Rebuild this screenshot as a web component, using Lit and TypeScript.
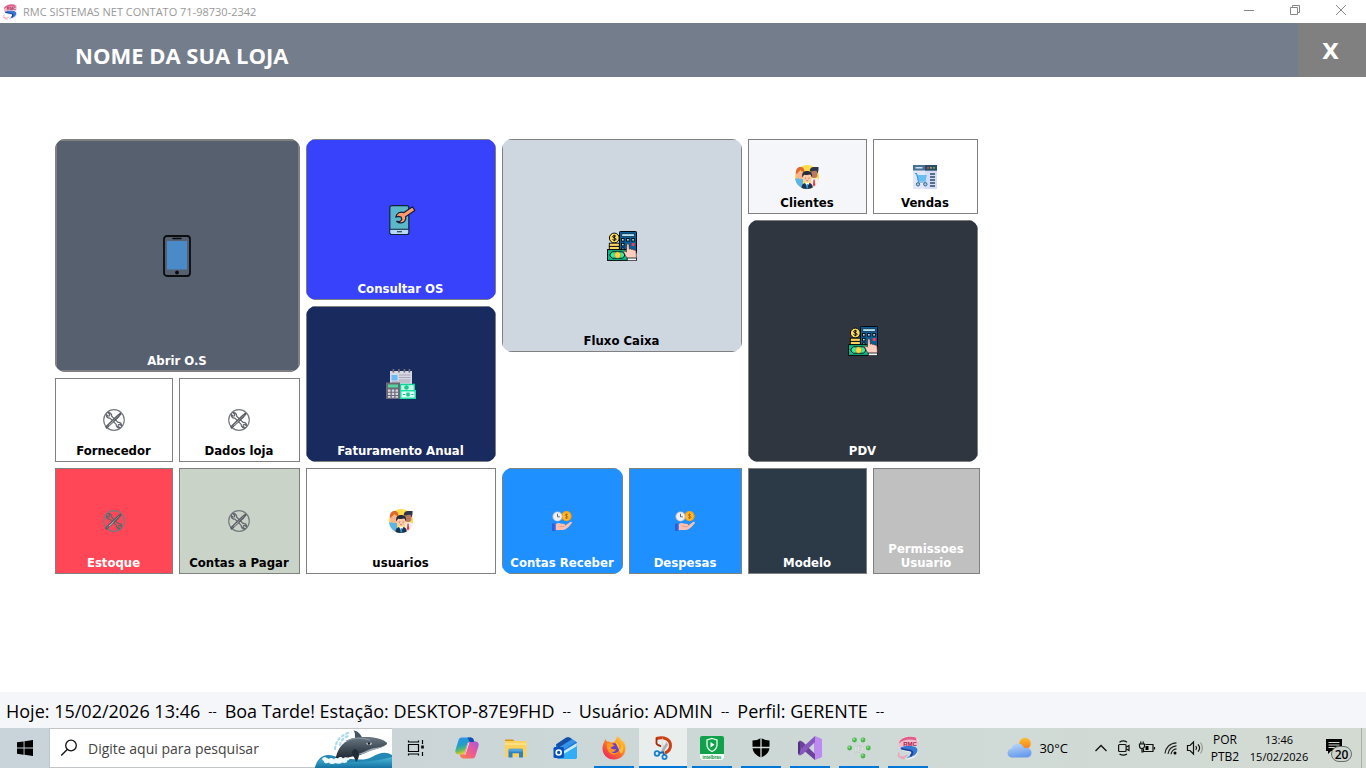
import { LitElement, html, css, svg, TemplateResult } from "lit";
import { customElement, property } from "lit/decorators.js";
import { classMap } from "lit/directives/class-map.js";

const icon = (w: number, h: number, body: unknown) =>
  html`<svg width=${w} height=${h} viewBox="0 0 ${w} ${h}" aria-hidden="true">${body}</svg>`;

const phone = icon(28, 42, svg`
  <rect x="1" y="1" width="26" height="40" rx="3" fill="none" stroke="#0b0d10" stroke-width="1.8"/>
  <rect x="4" y="6" width="20" height="28.500" fill="#4a8ac9"/>
  <path d="M10 3.500h8" stroke="#0b0d10" stroke-width="1.500" stroke-linecap="round"/>
  <circle cx="14" cy="37.500" r="1.900" fill="#0b0d10"/>`);

const phoneRepair = icon(30, 30, svg`
  <rect x="3.800" y=".6" width="19" height="28.800" rx="2" fill="#5cb8c9" stroke="#14203c" stroke-width="1.200"/>
  <path d="M4.400 24.500h17.800v3a1.500 1.500 0 0 1-1.500 1.400H6a1.500 1.500 0 0 1-1.600-1.400z" fill="#b5daf5"/>
  <path d="M4 24.300h18.600" stroke="#14203c" stroke-width="1.100"/>
  <path d="M11 26.800h5" stroke="#14203c" stroke-width="1.100"/>
  <path d="M26.500 1.800 18 7.600c-3.500-1.300-7.500.2-8.200 4.600l2.400-.8 3 .8.600 2.400-2 2-3.200-.3c2.500 2.600 7 2 8.500-.8.700-1.200.8-2.600.5-3.800l9.200-6.300z" fill="#ff9a6a" stroke="#14203c" stroke-width="1.200" stroke-linejoin="round"/>`);

const cashCalculator = icon(30, 30, svg`
  <rect x="12.500" y=".5" width="17" height="22" rx=".8" fill="#0b5f98" stroke="#05080c"/>
  <rect x="14.800" y="2.800" width="12.500" height="2.700" fill="#b9e3f5" stroke="#05223a" stroke-width=".7"/>
  <g fill="#b9d9ea" stroke="#05080c" stroke-width=".9"><rect x="14.500" y="7.500" width="2.600" height="2.600"/><rect x="19.600" y="7.500" width="2.600" height="2.600"/><rect x="24.800" y="7.500" width="2.600" height="2.600"/><rect x="14.500" y="12.300" width="2.600" height="2.600"/><rect x="14.500" y="17" width="2.600" height="2.600"/></g>
  <rect x="24.700" y="12" width="3" height="3" fill="#ef3f55"/>
  <circle cx="7.300" cy="7" r="4.900" fill="#ffdb57" stroke="#05080c"/>
  <path d="M9 5.300c-1-1-3.400-.8-3.400.5s3.500.8 3.500 2.300-2.600 1.500-3.600.4M7.300 3.800v6.400" fill="none" stroke="#05080c" stroke-width="1"/>
  <rect x="2.300" y="12.200" width="10" height="3.200" fill="#ffd35c" stroke="#05080c" stroke-width=".9"/>
  <rect x="2.300" y="15.400" width="10" height="3.200" fill="#ffd35c" stroke="#05080c" stroke-width=".9"/>
  <rect x=".5" y="18.600" width="20" height="10.800" fill="#12b582" stroke="#05080c"/>
  <path d="M5.500 20.800h10l2 2.200v2l-2 2.200h-10L3 25v-2z" fill="#2cf0a8" stroke="#05080c" stroke-width=".9"/>
  <circle cx="10.600" cy="24" r="3.100" fill="#ffd24a" stroke="#a98212" stroke-width=".5"/>
  <path d="M19.800 13c1.500-.6 2.200.2 2.300 1.400l.3 3.800c1-.8 2-.5 2.300.4.800-.6 1.700-.3 2 .5 1.400-.4 2.300.3 2.400 1.500l.4 7H20.500c-1.800-2.200-2.800-4.400-3.700-6.300-.3-1.400 1.400-1.700 2.200-.6l.4.5z" fill="#ffcdbd" stroke="#2b1512" stroke-width=".6"/>
  <path d="M20.200 27h9.300v2.700h-9.300z" fill="#f3f6f7" stroke="#05080c" stroke-width=".8"/>`);

const billing = icon(30, 30, svg`
  <path d="M4 2h22v15H4z" fill="#d6d8e3"/>
  <g fill="#6f6a78"><path d="M6.500 0h1.800v3.500H6.500zM12 0h1.800v3.500H12zM17.500 0h1.800v3.500h-1.800zM22.500 0h1.800v3.500h-1.800z"/></g>
  <path d="M5.500 6h6v5.500h-6z" fill="#6cb9f7"/>
  <path d="M13 6h11.500M13 8.500h11.500M13 11h11.500M6 13h18" stroke="#aaa4b8" stroke-width="1.100"/>
  <path d="M0 13.500h14V30H0z" fill="#6d6877"/>
  <path d="M2 15.500h10v3H2z" fill="#55d49d"/>
  <g fill="#d9d6e3"><path d="M2 20.500h2.500v2.300H2zM5.800 20.500h2.500v2.300H5.800zM9.500 20.500H12v2.300H9.500zM2 23.700h2.500V26H2zM5.800 23.700h2.500V26H5.800zM9.500 23.700H12V26H9.500zM2 26.900h2.500v1.900H2zM5.800 26.900h2.500v1.900H5.800zM9.500 26.900H12v1.900H9.500z"/></g>
  <path d="M14 14.800h15V22H14z" fill="#0dd69a"/><path d="M15.200 16.200h12.500V22H15.200z" fill="#c8fce8"/>
  <circle cx="20.500" cy="18.500" r="2.300" fill="#1ac98f"/>
  <path d="M14 21h16v9H14z" fill="#1be0a4"/><path d="M15.500 22.500h13v6h-13z" fill="#e6fff6"/>
  <circle cx="22" cy="25.500" r="2.300" fill="#32d9a5"/><path d="M17 25.500h2M25.500 25.500h2M22 24v3" stroke="#18b585" stroke-width="1"/>`);

const tools = icon(22, 22, svg`
  <circle cx="11" cy="11" r="10.300" fill="none" stroke="#777b81" stroke-width="1.200"/>
  <path d="M5 3.700 6.900 5.500l-.4 1.300-1.400.4-1.700-1.700c-.4 2.200 1.200 4 3.500 3.600l6.300 6.300c-.3 2.300 1.500 3.900 3.600 3.400L15 17.200l.4-1.500 1.500-.4 1.700 1.700c.4-2.300-1.300-3.900-3.600-3.600L8.700 7.200C9 4.900 7.300 3.300 5 3.700z" fill="none" stroke="#62666c" stroke-width="1.200"/>
  <path d="m3.600 19.200-.9-1.400L14.200 6.600l3.200-2.400.6.600-2.400 3.200z" fill="#8b8e93" stroke="#54585e" stroke-width="1.100" stroke-linejoin="round"/>
  <path d="M6 16.300 10.500 12" stroke="#d8dadc" stroke-width=".8"/>`);

const people = icon(24, 24, svg`
  <defs><clipPath id="disc"><circle cx="12" cy="12" r="12"/></clipPath></defs>
  <g clip-path="url(#disc)">
    <path d="M0 0h24v24H0z" fill="#ffdc4a"/>
    <path d="M-1 24V14.500c1.500-2 7-2 9 0V24z" fill="#5cb5e8"/>
    <path d="M16 14c2-1 7-1 9 1v9h-9z" fill="#edf0f4"/>
  </g>
  <path d="M1.300 6.500h7v5.800c-2 2.300-5.500 2-7-.3z" fill="#f8b48e"/>
  <path d="M.8 8.500C.6 4.500 2.500 2 5.300 2c3 0 4.500 2 4.100 5-1.600 0-3-.6-4-1.800C4 7 2.400 7.200 2 9z" fill="#e0692f"/>
  <path d="M15.800 5h6.800l-.3 6c-1 2.500-4.800 2.800-6.500.3z" fill="#b97860"/>
  <path d="M14.800 6.500c-.3-3 1.400-4.500 4-4.500H23.500c.2 1.500 0 4-.9 6.500l-1-2.800c-2 0-4.500.7-6.800.8z" fill="#30344a"/>
  <path d="M18.400 14.500h1.200l.8 5.500-1.500 1.500-1-1.500z" fill="#ef3e4c"/>
  <path d="M6.500 22.700c0-3 1.800-4.400 3.800-4.700h4c2.200.4 3.400 1.900 3.500 4.500-3 2-8 2-11.300.2z" fill="#1d3150"/>
  <path d="m9.800 17.500 2.400 4.300 2.500-4.300z" fill="#fff"/><path d="M11.700 19h1.100l.5 4.500h-2z" fill="#26a0dd"/>
  <circle cx="12.200" cy="12.800" r="4.600" fill="#ffc9a7"/>
  <path d="M7.300 12.500c-.8-4.500 1.200-6.500 4.800-6.500s5.600 2 4.900 6.500c-.7-1.500-1-2.500-1.800-3-2 .7-5 .4-6 .2-.8.700-1.200 1.600-1.900 2.800z" fill="#252b3e"/>
  <path d="M10.300 12.700v.8M14 12.700v.8" stroke="#333" stroke-width=".8"/><path d="M11 15.300q1.200.8 2.300 0" fill="none" stroke="#c06a50" stroke-width=".7"/>`);

const shopWindow = icon(24, 24, svg`
  <path d="M0 0h24v24H0z" fill="#e3e7fc"/><path d="M12 0h12v24H12z" fill="#d5dcfa"/>
  <path d="M0 0h24v5.500H0z" fill="#467395"/><path d="M12 0h12v5.500H12z" fill="#2b4c66"/>
  <path d="M2.500 2.800h7" stroke="#e6f2ff" stroke-width="1.300"/>
  <circle cx="15" cy="2.800" r=".9" fill="#f05b50"/><circle cx="18" cy="2.800" r=".9" fill="#f5bd49"/><circle cx="21" cy="2.800" r=".9" fill="#6bcf72"/>
  <path d="M3.500 10h10.300l-1.200 6H5z" fill="#68bdf3"/>
  <path d="M1.800 8.500h1.800L5.600 17h7.700" fill="none" stroke="#3c9de0" stroke-width="1.100"/>
  <circle cx="5" cy="19.300" r="1.700" fill="#9fc8e8" stroke="#355f80" stroke-width=".9"/><circle cx="12.300" cy="19.300" r="1.700" fill="#9fc8e8" stroke="#355f80" stroke-width=".9"/>
  <path d="M17 9h5M17 12h5M17 15h5M17 18h5M17 21h5" stroke="#2e4c65" stroke-width="1.400"/>`);

const handCoin = icon(20, 20, svg`
  <circle cx="14.500" cy="5.200" r="5.100" fill="#f6a415"/><circle cx="14.500" cy="5.200" r="3.700" fill="#ffba2e"/>
  <path d="M16 3.700c-1-.8-2.900-.5-2.900.5s2.900.7 2.900 2-2.100 1.400-3 .4M14.500 2.500v5.400" fill="none" stroke="#b66a08" stroke-width=".9"/>
  <circle cx="5.500" cy="5.500" r="5.100" fill="#b9bccb"/><circle cx="5.500" cy="5.500" r="4.200" fill="#edf0f5"/>
  <path d="M5.500 2.800v3h2.300" fill="none" stroke="#555a6b" stroke-width=".9"/>
  <path d="M3.500 13.500c2-1.800 3.500-1.800 5.500-1 1.500.5 3 .2 3.800.8.400.5.300 1.200-.2 1.700l5.500-4c1-.7 2.400.1 1.600 1.200-1.700 2.400-4 5-6.700 6.300-3 1-6 .2-9.500.8z" fill="#ffc0ab"/>
  <path d="M7.500 15.500h5" stroke="#e99a86" stroke-width=".9"/>
  <path d="M0 12.500h3.500V20H0z" fill="#2c5ddb"/><path d="M2.800 12.500h1.200V19H2.800z" fill="#4d82ec"/>`);

const rmcLogo = (size: number) => html`<svg width=${size} height=${size} viewBox="0 0 24 24" aria-hidden="true">
  <path d="M7 1.500C12-.5 18-.5 22.500 3c.6 6-4 4-9 4.500-3 .3-3.500 1.500-1 2.200 4.500.8 9 1.300 9.500 5.500C22 20 17 23.500 9 23.500c4.500-1.500 7-3.500 6.500-6.500-2-1.500-8-1-11-4C1.500 9 3 4 7 1.500z" fill="#e9eef8"/>
  <path d="M21.500 1.500C12-1 2.500 2 2.500 8c0 3 2 4.500 4.500 5 0-2.500 2-3 4-3h10c1-1.500 1.500-4 .5-5.500z" fill="#f3b9cc"/>
  <path d="M19.500 1.500C12-.5 4 2 3 7.500 8 3 14 3 20.500 4.500z" fill="#dd5f88"/>
  <path d="M4 12c3 2.500 9 1 11.500 3 1.500 2-1 4.500-5 7 7-1 11-4 11-8 0-2.500-3-3.500-6-4h-6c-2 0-3 1-5.500 2z" fill="#3678d2"/>
  <path d="M5 12.500c4 2 9 .8 11 3 .8 1.500 0 3-1.500 4.500" fill="none" stroke="#1b3f98" stroke-width="1.800"/>
  <path d="M3 16.500c-1.500 3 1 6.300 5.500 6M2 20c3 2 7 1.500 9-1" fill="none" stroke="#efa0ba" stroke-width="1.400"/>
  <text x="14" y="9.500" text-anchor="middle" font-family="Liberation Sans" font-size="6" font-weight="700" fill="#a91d4c">RMC</text></svg>`;

const whale = html`<svg class="whale" width="77" height="40" viewBox="0 0 77 40" aria-hidden="true">
  <defs>
    <linearGradient id="sea" x2="0" y2="1"><stop stop-color="#4bb7d6"/><stop offset="1" stop-color="#1473a3"/></linearGradient>
    <linearGradient id="skin" x2="0" y2="1"><stop stop-color="#6b7883"/><stop offset=".5" stop-color="#3d4953"/><stop offset="1" stop-color="#17212b"/></linearGradient>
  </defs>
  <path d="M0 40c1-6 5-12 12-13 8-1 11 5 20 4 12 0 17 2 25-2 7-4 13-6 20-2v13z" fill="#2388b6"/>
  <g fill="none" stroke="#a9daf0" stroke-width="2.200" stroke-linecap="round" stroke-dasharray="2 3"><path d="M20 21c1-8 5-13 13-16"/><path d="M25 17c1-5 5-9 10-9"/></g>
  <path d="M18 33c3-1 3-6 5-10C27 14 37 9 47 9c10-.5 19 1 24 5 2 1.500 1 2.500-1 3.500-6 3.500-14 4-20 7.500-8 4-13 3-19 5-5 2-8 4-13 3z" fill="url(#skin)"/>
  <path d="M40 10c0-4 0-6-1.500-7.500C43 3 45.500 6 47 9.500z" fill="#46545f"/>
  <path d="M70 17.500C64 20 58 19.500 53 22c-4 2-8 4-13 4.500 5 .5 9-.5 13-2.500 6-3 12-3 17-6.500z" fill="#9ba9b3"/>
  <path d="M39 21c2 0 5 2 5 5 0 3-1 6-3 8-1-5-4-6-4-10z" fill="#202c37"/>
  <path d="M51 15.500c2-1.500 5-1.500 6 0-1 2-4 2-6 0z" fill="#cfd8de"/><circle cx="54" cy="15.500" r="1.300" fill="#111820"/>
  <path d="M31 13c8-4 17-3 24-1" fill="none" stroke="#8393a0" stroke-width="1.300"/>
  <path d="M0 40c1-5 5-10 11-11-1 5 5 5 9 6 9-1 14 0 20-1 13 0 22-1 37-5v11z" fill="url(#sea)"/>
  <path d="M10 29c-3 0-4 3-1 4-1 2 3 3 5 1.500 1 2 5 2 6 .5 3 1 6 1 7-.5 3 1 6 0 5-2 3 0 3-2 1-2.500-2-1.500-4-.5-5 .5-1-2-4-2-5 0-2-1-4 0-4 1-1-2-4-2-5-.5z" fill="#eef9fd"/></svg>`;

const taskIcons: Record<string, TemplateResult> = {
  view: icon(18, 18, svg`<g fill="none" stroke="#000" stroke-width="1.200"><path d="M1.500 5.500h10v7h-10z"/><path d="M1.500 1.500V3h10V1.500M1.500 16.500V15h10v1.500M15.500 1v4M15.500 13v4"/></g><path d="M14.200 6.500h2.600v3h-2.600z"/>`),
  copilot: icon(24, 24, svg`
    <defs><linearGradient id="ca" x2=".3" y2="1"><stop stop-color="#2a90f2"/><stop offset=".5" stop-color="#1fa0c4"/><stop offset=".75" stop-color="#5fb86a"/><stop offset="1" stop-color="#f2cb1c"/></linearGradient><linearGradient id="cb" x1="1" x2="0" y2="1"><stop stop-color="#a857dc"/><stop offset=".5" stop-color="#ef5a91"/><stop offset="1" stop-color="#f9813d"/></linearGradient></defs>
    <path d="M6.500 1.500h9c2 0 2.700 1 3.200 2.500l.6 2h-4.500c-1.500 0-2.200.8-2.600 2l-2.500 8c-.6 1.700-1.500 2.500-3.200 2.500H3.500C.8 18.500-.2 16 .6 13.500l2.900-9.300C4 2.500 5 1.500 6.500 1.500z" fill="url(#ca)"/>
    <path d="M17.500 22.500h-9c-2 0-2.700-1-3.200-2.500l-.6-1.500h2.500c1.700 0 2.500-.8 3-2.500l2.600-8.500c.5-1.500 1.300-2 2.700-2h5c2.700 0 3.700 2.500 2.900 5l-2.900 9.300c-.5 1.700-1.500 2.700-3 2.700z" fill="url(#cb)"/>
    <path d="M12.500 1.500h3c2 0 2.700 1 3.200 2.500l.6 2h-4.500z" fill="#1c48a9"/>
    <path d="M10.500 16.500 13 8c.3-1 .8-1.500 1.500-1.700l-4 12.200H7.500c1.700 0 2.500-.5 3-2z" fill="#eef2ef"/>`),
  folder: icon(24, 24, svg`<path d="M1 3.500h8l2 2h-10z" fill="#dd9412"/><path d="M1 5h21.500v16H1z" fill="#fcd15c"/><path d="M1 7h21.500v2H1z" fill="#ffdf83"/><path d="M4.500 21.500v-7.200c0-1 .7-1.500 1.500-1.500h11.500c1 0 1.500.6 1.500 1.500v7.200h-4v-4.300H8.500v4.300z" fill="#2d82c5"/><path d="M5 13h13.800v2.500H4.500z" fill="#54a8dd"/>`),
  outlook: icon(24, 24, svg`
    <path d="M3 8.500 13 1.800c1.400-.8 2.600-.8 4 0l7 4.700v14c0 1.500-1 2.500-2.500 2.500H6.500C4.500 23 3 22 3 20z" fill="#1976d8"/>
    <path d="M3 8.500 13 1.800c1.400-.8 2.600-.8 4 0l2 1.400L6 12z" fill="#1550a5"/>
    <path d="M5 12 19 3.200l4 2.600L9 15z" fill="#3593ea"/><path d="m9 16 14.800-9v4.500L12 18.500z" fill="#c9e9fd"/>
    <path d="M24 10 9 19l-3 3.800c.5.200 1 .2 1.500.2h14c1.500 0 2.500-1 2.500-2.500z" fill="#31aef7"/>
    <rect x=".5" y="11" width="10.500" height="11" rx="1.500" fill="#0b52b8"/><circle cx="5.700" cy="16.500" r="2.500" fill="none" stroke="#fff" stroke-width="1.600"/>`),
  firefox: icon(24, 24, svg`
    <defs><linearGradient id="ff" x1="1" x2=".2" y2="1"><stop stop-color="#ffe14d"/><stop offset=".45" stop-color="#ff8a1c"/><stop offset="1" stop-color="#f0245d"/></linearGradient></defs>
    <path d="M15 0c4 2.500 4.200 4.500 5 5.500l.5-1C23 7 23.600 10 23.500 13c-.5 6.500-5.500 10.500-11.500 10.500C5 23.500.5 18.500.5 12.500c0-3 .8-5 2-7L3 3l2 2.500c1.500-.3 3 0 4 1 2 .2 3-.2 4-1.500C14.500 3 15 1.500 15 0z" fill="url(#ff)"/>
    <circle cx="12.300" cy="12.300" r="5" fill="#6b3dcb"/>
    <path d="M5 7.500c3-.8 6 0 7.500 2.200-1.500 1-3.500 1-3.800 2.500 2 .8 3.500 1.700 5.300.8-.5 2.500-3 3.500-5 2.500 2 2.500 6 2 8-.5C15 20 8 19 6.300 15 5 12.500 4.500 10 5 7.500z" fill="#ff9b22"/>
    <path d="M13 5.500c2 1 5 3 4.500 8 2-1 2.500-5 .5-7.500 4 3 4.500 9 1 12" fill="#ffc233"/>`),
  snip: icon(24, 24, svg`
    <path d="M5.500 2.500C13 0 19.500 3.500 19.500 9.500c0 4-2 6-5.500 7.500" fill="none" stroke="#cf3e12" stroke-width="3"/>
    <path d="M5.500 1.500v6c1 2 4 2.700 7 3" fill="none" stroke="#a52b0c" stroke-width="1.800"/>
    <path d="m11.500 1 2 15-2 2-1.500-8z" fill="#dfe3e5"/><path d="m15.500 6-6 10 1.800 2 5.700-9z" fill="#a9b0b5"/>
    <circle cx="6" cy="17.500" r="2.300" fill="none" stroke="#1583ce" stroke-width="1.800"/><circle cx="13.500" cy="21" r="2.100" fill="none" stroke="#1583ce" stroke-width="1.800"/><path d="m8.300 17 4-.8 1 2.800" fill="none" stroke="#116aad" stroke-width="1.800"/>`),
  intelbras: html`<svg width="24" height="24" viewBox="0 0 24 24" aria-hidden="true"><rect width="24" height="24" rx="2" fill="#12a14b"/><path d="M0 18h24v4a2 2 0 0 1-2 2H2a2 2 0 0 1-2-2z" fill="#f4fbf6"/><path d="M12 2.500 17 4v5c0 3-2 5-5 6.500C9 14 7 12 7 9V4z" fill="none" stroke="#e8fff0" stroke-width="1.300"/><path d="m10.500 6 4 2.700-4 2.700z" fill="#fff"/><text x="12" y="22.500" text-anchor="middle" font-family="Liberation Sans" font-size="4.500" font-weight="700" fill="#12913f">intelbras</text></svg>`,
  defender: icon(20, 20, svg`<path d="M10 0c2.500 1.700 5.500 2.500 8.500 2.500V9c0 5-3.500 8.500-8.500 10.500C5 17.500 1.500 14 1.500 9V2.500C4.500 2.500 7.500 1.700 10 0z"/><path d="M10 0v20M1 9.500h18" stroke="#cfdad7" stroke-width="1.300"/>`),
  studio: icon(24, 24, svg`<path d="m17 0 6 2.500c.6.300 1 .8 1 1.500v16c0 .7-.4 1.200-1 1.500L17 24l-1-3V3z" fill="#bd8af2"/><path d="m0 6 2-1.500L5 6l12 12v6L3.500 12.500 2 19.500 0 18z" fill="#6d429c"/><path d="m0 18 2 1.500L5 18 17 6V0L5 11z" fill="#8658bd"/><path d="M0 6v12l2-1V7z" fill="#52307c"/>`),
  id: html`<svg width="24" height="24" viewBox="0 0 24 24" aria-hidden="true"><g fill="#45b74b"><circle cx="7.500" cy="4" r="2.400"/><circle cx="16" cy="4" r="2.400"/><circle cx="2.700" cy="12" r="2.400"/><circle cx="21.300" cy="12" r="2.400"/><circle cx="16" cy="20" r="2.400"/></g><g fill="#9be28e"><circle cx="7" cy="3.300" r="1"/><circle cx="15.500" cy="3.300" r="1"/><circle cx="2.200" cy="11.300" r="1"/><circle cx="20.800" cy="11.300" r="1"/><circle cx="15.500" cy="19.300" r="1"/></g><text x="12" y="15.500" text-anchor="middle" font-family="Liberation Sans" font-size="9" font-weight="700" fill="#fff" stroke="#a9b3ae" stroke-width=".4">ID</text></svg>`,
  rmc: rmcLogo(24),
};

interface Task { id: string; name: string; open?: boolean; active?: boolean }

const tasks: Task[] = [
  { id: "copilot", name: "Copilot" },
  { id: "folder", name: "Explorador de Arquivos" },
  { id: "outlook", name: "Outlook" },
  { id: "firefox", name: "Firefox", open: true },
  { id: "snip", name: "Ferramenta de Captura", open: true, active: true },
  { id: "intelbras", name: "Intelbras", open: true },
  { id: "defender", name: "Segurança", open: true },
  { id: "studio", name: "Visual Studio", open: true },
  { id: "id", name: "ID", open: true },
  { id: "rmc", name: "RMC Sistemas", open: true },
];

@customElement("menu-tile")
class MenuTile extends LitElement {
  @property() label = "";
  @property() tone = "white";
  @property({ type: Boolean }) round = false;
  @property({ attribute: false }) picture: TemplateResult | null = null;

  static styles = css`
    :host { display: block; min-width: 0; }
    .tile {
      box-sizing: border-box; width: 100%; height: 100%; margin: 0; padding: 3px 1px 3px 0;
      display: grid; place-items: center; border: 1px solid #808080; color: #fff;
      font: bold 13px/14px "DejaVu Sans Condensed", "DejaVu Sans", sans-serif;
    }
    .round { clip-path: inset(0 round 10px); }
    .thick { border-width: 2px; padding: 2px 1px 2px 0; }
    svg { grid-area: 1 / 1; display: block; }
    .label { grid-area: 1 / 1; align-self: end; text-align: center; }
    .slate { background: #57606f; }
    .blue { background: #3742fa; }
    .navy { background: #192a5e; }
    .mist { background: #ced6e0; color: #000; }
    .snow { background: #f5f6fa; color: #000; }
    .white { background: #fff; color: #000; }
    .night { background: #2f3640; }
    .red { background: #ff4757; }
    .sage { background: #cad3c8; color: #000; }
    .sky { background: #1e90ff; }
    .ink { background: #2c3a47; }
    .silver { background: #c0c0c0; }
  `;

  render() {
    return html`<button class=${classMap({ tile: true, round: this.round, thick: this.tone === "slate", [this.tone]: true })}>
      ${this.picture}<span class="label">${this.label}</span></button>`;
  }
}

@customElement("app-root")
class AppRoot extends LitElement {
  static styles = css`
    :host { display: flex; flex-direction: column; min-height: 100vh; background: #fff; color: #000; font-family: "Open Sans", "Noto Sans", sans-serif; }
    button { margin: 0; padding: 0; border: 0; background: none; color: inherit; font: inherit; }
    svg { display: block; flex: none; }

    .titlebar { display: flex; align-items: center; height: 23px; padding-left: 2px; color: #999; font-size: 11px; }
    .titlebar .caption { flex: 1; margin-left: 5px; }
    .window-button { width: 46px; height: 23px; display: grid; place-items: center; }
    .window-buttons { display: flex; padding: 0 2px 3px 0; }

    .banner { display: flex; align-items: stretch; height: 54px; background: #747d8c; color: #fff; }
    .store { flex: 1; margin: 0; padding: 10px 0 0 75px; font-size: 22px; line-height: 44px; font-weight: 700; }
    .close { width: 68px; padding: 3px 3px 0 0; background: #808080; font: bold 22px/50px "DejaVu Sans", sans-serif; }

    .board { flex: 1; padding: 62px 55px 24px; }
    .tiles { display: grid; gap: 6px; max-width: 925px; grid-template-columns: 118fr 121fr 190fr 121fr 113fr 119fr 107fr; grid-template-rows: 323px 106px; }
    .stack { display: grid; gap: 6px; min-width: 0; }
    .pair { grid-column: span 2; }
    .service { grid-template: 233px 84px / 118fr 121fr; }
    .reports { grid-template-rows: 161px 156px; }
    .cash { grid-template-rows: 213px; }
    .sales { grid-template: 75px 242px / 119fr 105fr; padding-right: 2px; }

    .status { box-sizing: border-box; display: flex; align-items: center; flex-wrap: wrap; min-height: 36px; padding: 2px 6px 0; gap: 0 8px; background: #f5f6fa; font-size: 18px; white-space: pre; }
    .dash { font-size: 13px; }

    .taskbar { display: flex; align-items: stretch; height: 40px; background: linear-gradient(90deg, #c9d3da, #cbd5d8 30%, #ccd8d6 50%, #d0dad6 75%, #d3dad2); }
    .start { width: 49px; display: grid; place-items: center; }
    .search { box-sizing: border-box; width: 343px; display: flex; align-items: center; background: #fff; border: 1px solid #c3c6c8; border-right: 0; padding-left: 10px; }
    .query { flex: 1; min-width: 0; margin-left: 10px; padding: 0; border: 0; outline: 0; background: none; font: 14px "Open Sans", sans-serif; }
    .query::placeholder { color: #444; opacity: 1; }
    .tasks { display: flex; gap: 1px; margin-left: 3px; }
    .task { width: 48px; display: grid; place-items: center; }
    .task.open { background: linear-gradient(#0078d7, #0078d7) 50% 100% / 40px 2px no-repeat; }
    .task.active { background: linear-gradient(#0078d7, #0078d7) 0 100% / 100% 2px no-repeat, #e9eeed; }

    .tray { display: flex; align-items: center; margin-left: auto; font-size: 12px; }
    .weather { display: flex; align-items: center; gap: 7px; font-size: 13px; margin-right: 24px; }
    .tray-icons { display: flex; align-items: center; gap: 6px; }
    .two-line { line-height: 17px; text-align: center; }
    .language { width: 34px; margin-left: 4px; }
    .clock { width: 64px; margin-left: 5px; font-size: 11px; }
    .notes { margin: 0 8px 0 14px; padding-top: 6px; }
    .peek { align-self: stretch; width: 4px; border-left: 1px solid #a9b0ae; }
  `;

  tile(label: string, tone: string, picture: TemplateResult | null, extra: { round?: boolean; wide?: boolean } = {}) {
    return html`<menu-tile class=${classMap({ pair: !!extra.wide })} label=${label} tone=${tone} .picture=${picture} ?round=${!!extra.round}></menu-tile>`;
  }

  render() {
    return html`
      <header>
        <div class="titlebar">
          ${rmcLogo(16)}<span class="caption">RMC SISTEMAS NET CONTATO 71-98730-2342</span>
          <div class="window-buttons">
            <button class="window-button" aria-label="Minimizar">${icon(10, 10, svg`<path d="M0 5.500h10" stroke="#888"/>`)}</button>
            <button class="window-button" aria-label="Restaurar">${icon(10, 10, svg`<path d="M.5 2.500h7v7h-7zM2.500 2.500v-2h7v7h-2" fill="none" stroke="#888"/>`)}</button>
            <button class="window-button" aria-label="Fechar janela">${icon(10, 10, svg`<path d="m0 0 10 10M10 0 0 10" stroke="#888"/>`)}</button>
          </div>
        </div>
        <div class="banner"><h1 class="store">NOME DA SUA LOJA</h1><button class="close">X</button></div>
      </header>

      <main class="board">
        <div class="tiles">
          <div class="stack pair service">
            ${this.tile("Abrir O.S", "slate", phone, { round: true, wide: true })}
            ${this.tile("Fornecedor", "white", tools)}
            ${this.tile("Dados loja", "white", tools)}
          </div>
          <div class="stack reports">
            ${this.tile("Consultar OS", "blue", phoneRepair, { round: true })}
            ${this.tile("Faturamento Anual", "navy", billing, { round: true })}
          </div>
          <div class="stack pair cash">${this.tile("Fluxo Caixa", "mist", cashCalculator, { round: true })}</div>
          <div class="stack pair sales">
            ${this.tile("Clientes", "snow", people)}
            ${this.tile("Vendas", "white", shopWindow)}
            ${this.tile("PDV", "night", cashCalculator, { round: true, wide: true })}
          </div>
          ${this.tile("Estoque", "red", tools)}
          ${this.tile("Contas a Pagar", "sage", tools)}
          ${this.tile("usuarios", "white", people)}
          ${this.tile("Contas Receber", "sky", handCoin, { round: true })}
          ${this.tile("Despesas", "sky", handCoin)}
          ${this.tile("Modelo", "ink", null)}
          ${this.tile("Permissoes Usuario", "silver", null)}
        </div>
      </main>

      <footer>
        <div class="status">
          <span>Hoje: 15/02/2026 13:46</span><span class="dash">--</span>
          <span>Boa Tarde! Estação: DESKTOP-87E9FHD</span><span class="dash">--</span>
          <span>Usuário: ADMIN</span><span class="dash">--</span>
          <span>Perfil: GERENTE</span><span class="dash">--</span>
        </div>
        <div class="taskbar">
          <button class="start" aria-label="Iniciar">${icon(16, 16, svg`<path d="M0 2.300 6.600 1.400v6.200H0zM7.500 1.200 16 0v7.600H7.500zM0 8.500h6.600v6.200L0 13.800zM7.500 8.500H16V16l-8.500-1.200z"/>`)}</button>
          <label class="search">
            ${icon(18, 18, svg`<circle cx="11" cy="6.500" r="5.300" fill="none" stroke="#111" stroke-width="1.300"/><path d="m7.200 10.500-6 6" stroke="#111" stroke-width="1.300"/>`)}
            <input class="query" type="text" placeholder="Digite aqui para pesquisar" aria-label="Pesquisar">
            ${whale}
          </label>
          <button class="task" aria-label="Visão de Tarefas">${taskIcons.view}</button>
          <nav class="tasks">
            ${tasks.map((t) => html`<button class=${classMap({ task: true, open: !!t.open, active: !!t.active })} aria-label=${t.name}>${taskIcons[t.id]}</button>`)}
          </nav>
          <div class="tray">
            <button class="weather">
              ${icon(25, 22, svg`<defs><linearGradient id="sun" x2="0" y2="1"><stop stop-color="#ffbd2f"/><stop offset="1" stop-color="#f57c1c"/></linearGradient><linearGradient id="cloud" x2=".3" y2="1"><stop stop-color="#bcdcfb"/><stop offset="1" stop-color="#6b9cec"/></linearGradient></defs><circle cx="18" cy="6.500" r="5.800" fill="url(#sun)"/><path d="M5.500 20.500C2 20.500.5 18.300.5 16c0-2.500 2-4.300 4.200-4.400C5.300 8.500 8 6.500 11 6.500c3 0 5.300 1.800 6.200 4.500 4-.8 7.300 1.500 7.300 4.700 0 2.800-2 4.800-5 4.800z" fill="url(#cloud)"/>`)}
              30°C
            </button>
            <div class="tray-icons">
              ${icon(18, 18, svg`<path d="m3.500 12 5.500-5.500 5.500 5.500" fill="none" stroke="#111" stroke-width="1.300"/>`)}
              ${icon(16, 18, svg`<g fill="none" stroke="#111" stroke-width="1.200"><rect x="2.600" y="5.500" width="7.500" height="7" rx="1"/><path d="m10.500 8 2.500-1.500v5L10.500 10M3.500 3.300C6 1.500 8.500 1.500 11 3.300M3.500 14.900c2.500 1.600 5 1.600 7.500 0"/></g>`)}
              ${icon(18, 18, svg`<g fill="none" stroke="#111" stroke-width="1.200"><path d="M7.500 5.500H15v7H5.500V10M16.500 8v2.500M1.500 5h5v2a2.500 2.500 0 0 1-5 0zM2.800 5V2.500M5.200 5V2.500M4 9.500V13h1.500"/></g><path d="M7.500 7h3v4h-3z"/>`)}
              ${icon(18, 18, svg`<g fill="none" stroke="#222" stroke-width="1.200"><path d="M3 14.500C3.500 8.500 8 4 14.500 3.800M6 15c.5-4.500 3.800-8 8.500-8.200M9 15.300c.3-2.800 2.500-5.300 5.500-5.500"/></g><circle cx="13" cy="14" r="1.500"/>`)}
              ${icon(18, 18, svg`<g fill="none" stroke="#111" stroke-width="1.200"><path d="M1.500 6.500H4l3.500-3.500v12L4 11.500H1.500z"/><path d="M9.800 7c1 1.300 1 2.700 0 4M12 5.300c2 2.300 2 5.100 0 7.400"/></g><path d="M14.500 3.500c2.500 3.200 2.500 7.800 0 11" fill="none" stroke="#999" stroke-width="1.200"/>`)}
            </div>
            <button class="two-line language">POR<br>PTB2</button>
            <button class="two-line clock">13:46<br>15/02/2026</button>
            <button class="notes" aria-label="20 notificações">
              <svg width="28" height="26" viewBox="0 0 28 26"><path d="M1 1h16v12H6l-3 3v-3H1z"/><path d="M3.500 4.500h11M3.500 7h11M3.500 9.500h8" stroke="#d3dad2" stroke-width="1"/><rect x="6.500" y="8.500" width="20" height="15" rx="7.500" fill="#cdd4ce" stroke="#666d6a"/><text x="16.500" y="20.500" text-anchor="middle" font-family="Open Sans" font-size="12" font-weight="600">20</text></svg>
            </button>
            <div class="peek"></div>
          </div>
        </div>
      </footer>`;
  }
}
